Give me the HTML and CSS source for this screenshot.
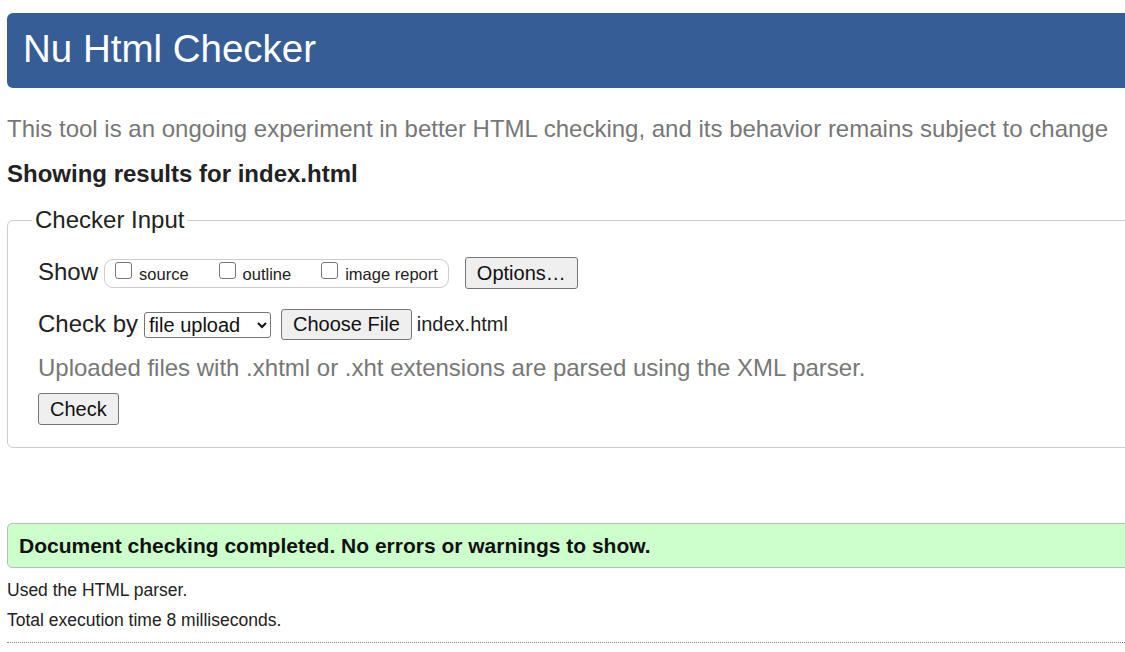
FILE: index.html
```html
<!DOCTYPE html>
<html lang="en">
<head>
<meta charset="utf-8">
<title>Nu Html Checker</title>
<link rel="stylesheet" href="styles.css">
</head>
<body>
<div class="page">
  <header class="banner"><h1 class="title">Nu Html Checker</h1></header>
  <p class="intro">This tool is an ongoing experiment in better HTML checking, and its behavior remains subject to change</p>
  <h2 class="showing">Showing results for index.html</h2>
  <form class="form">
    <fieldset class="panel">
      <legend class="legend">Checker Input</legend>
      <div class="row row-show">
        <span class="label">Show</span>
        <span class="group">
          <label class="opt"><input type="checkbox" class="cb">source</label>
          <label class="opt"><input type="checkbox" class="cb">outline</label>
          <label class="opt"><input type="checkbox" class="cb">image report</label>
        </span>
        <button type="button" class="btn btn-options">Options…</button>
      </div>
      <div class="row row-check">
        <span class="label">Check by</span>
        <select class="select"><option>file upload</option></select>
        <button type="button" class="btn btn-file">Choose File</button>
        <span class="filename">index.html</span>
      </div>
      <p class="hint">Uploaded files with .xhtml or .xht extensions are parsed using the XML parser.</p>
      <div class="row row-submit">
        <button type="button" class="btn btn-check">Check</button>
      </div>
    </fieldset>
  </form>
  <p class="success">Document checking completed. No errors or warnings to show.</p>
  <p class="meta meta-first">Used the HTML parser.</p>
  <p class="meta meta-second">Total execution time 8 milliseconds.</p>
  <hr class="rule">
</div>
</body>
</html>
```
FILE: styles.css
```css
html {
  overflow: hidden;
}
body {
  margin: 0;
  background: #fff;
  color: #222;
  font-family: "Liberation Sans", Arial, sans-serif;
}
.page {
  width: 1160px;
  padding: 13px 0 0 7px;
}
.banner {
  height: 75px;
  background: #365d95;
  border-radius: 6px 0 0 6px;
  display: flex;
  align-items: center;
  padding-left: 16px;
}
.title {
  margin: 0 0 3px;
  color: #fff;
  font-weight: normal;
  font-size: 38.5px;
  line-height: 42px;
}
.intro {
  margin: 27px 0 0;
  font-size: 24px;
  line-height: 28px;
  color: #777;
}
.showing {
  margin: 18px 0 0;
  font-size: 24px;
  line-height: 26px;
  font-weight: bold;
  color: #222;
}
.form {
  margin: 19px 0 0;
}
.panel {
  margin: 0;
  border: 1px solid #ccc;
  border-radius: 6px;
  padding: 23px 0 22px 30px;
}
.legend {
  font-size: 24px;
  line-height: 28px;
  padding: 0 3px;
  margin-left: -6px;
  color: #222;
}
.row {
  display: flex;
  align-items: center;
}
.label {
  font-size: 24px;
  line-height: 28px;
  margin-right: 6px;
  position: relative;
  top: -1px;
}
.group {
  display: flex;
  align-items: center;
  height: 27px;
  border: 1px solid #ccc;
  border-radius: 9px;
  padding: 0 10px 0 10px;
  gap: 30px;
}
.opt {
  display: flex;
  align-items: center;
  font-size: 16.5px;
  gap: 7px;
  position: relative;
  top: 1px;
}
.cb {
  appearance: none;
  -webkit-appearance: none;
  box-sizing: border-box;
  width: 17px;
  height: 17px;
  margin: -7px 0 0 0;
  border: 1px solid #767676;
  border-radius: 3px;
  background: #fff;
}
.btn {
  font-family: "Liberation Sans", Arial, sans-serif;
  font-size: 20px;
  color: #111;
  background: #efefef;
  border: 1px solid #767676;
  border-radius: 3px;
  padding: 0 11px;
  height: 32px;
}
.btn-options {
  margin-left: 16px;
}
.row-check {
  margin-top: 20px;
}
.select {
  font-family: "Liberation Sans", Arial, sans-serif;
  font-size: 20px;
  height: 26px;
  width: 127px;
  border: 1px solid #767676;
  border-radius: 3px;
  background: #fff;
  color: #111;
  margin-left: 0;
}
.btn-file {
  margin-left: 10px;
  height: 31px;
}
.filename {
  font-size: 20px;
  margin-left: 5px;
}
.hint {
  margin: 14px 0 0;
  font-size: 24px;
  line-height: 28px;
  color: #777;
}
.row-submit {
  margin-top: 11px;
}
.success {
  margin: 75px 0 0;
  height: 43px;
  display: flex;
  align-items: center;
  padding-left: 11px;
  background: #ccffcc;
  border: 1px solid #bbb;
  border-radius: 5px;
  font-size: 21px;
  font-weight: bold;
  color: #111;
}
.meta {
  font-size: 17.5px;
  line-height: 20px;
  color: #222;
}
.meta-first {
  margin: 12px 0 0;
}
.meta-second {
  margin: 10px 0 0;
}
.rule {
  margin: 12px 0 0;
  border: 0;
  border-top: 1px dotted #888;
}
```
